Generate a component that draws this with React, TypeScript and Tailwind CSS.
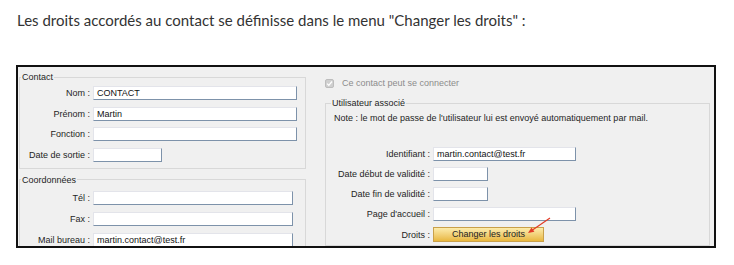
const Field = ({ w, value }: { w: string; value?: string }) => (
  <div
    className={`h-[14px] ${w} bg-white border border-t-[#e3e4ea] border-l-[#e3e4ea] border-b-[#7d92aa] border-r-[#7d92aa] pl-[3px] text-[9px] leading-[12px] text-[#111]`}
  >
    {value}
  </div>
);

const LeftRow = ({ label, w, value }: { label: string; w: string; value?: string }) => (
  <div className="flex items-center gap-[3px]">
    <span className="w-[70px] text-right">{label}</span>
    <Field w={w} value={value} />
  </div>
);

const RightRow = ({ label, children }: { label: string; children: React.ReactNode }) => (
  <div className="flex items-center gap-[3px]">
    <span className="w-[104px] text-right">{label}</span>
    {children}
  </div>
);

export default function App() {
  return (
    <div className="w-[734px] h-[265px] bg-white overflow-hidden">
      <p className="pt-[10px] pl-[17px] font-['Lato',sans-serif] text-[15px] leading-[20px] text-[#333]">
        Les droits accordés au contact se définisse dans le menu "Changer les droits" :
      </p>

      <div className="mt-[35px] ml-[16px] w-[700px] h-[183px] border-2 border-[#111] bg-[#f0f0f0] overflow-hidden font-['Liberation_Sans',sans-serif] text-[9px] leading-[12px] text-[#1e1e1e]">
        <div className="flex gap-[19px]">
          {/* left column */}
          <div className="w-[288px]">
            <fieldset className="ml-[1px] mt-[4px] w-[287px] border border-[#d8d8d8] pb-[6px]">
              <legend className="ml-[1px] px-[1px]">Contact</legend>
              <div className="mt-[3px] flex flex-col gap-[6.5px]">
                <LeftRow label="Nom :" w="w-[204px]" value="CONTACT" />
                <LeftRow label="Prénom :" w="w-[204px]" value="Martin" />
                <LeftRow label="Fonction :" w="w-[204px]" />
                <LeftRow label="Date de sortie :" w="w-[69px]" />
              </div>
            </fieldset>

            <fieldset className="ml-[1px] mt-[5px] w-[287px] border border-[#d8d8d8] pb-[6px]">
              <legend className="ml-[1px] px-[1px]">Coordonnées</legend>
              <div className="mt-[5px] flex flex-col gap-[7px]">
                <LeftRow label="Tél :" w="w-[200px]" />
                <LeftRow label="Fax :" w="w-[200px]" />
                <LeftRow label="Mail bureau :" w="w-[200px]" value="martin.contact@test.fr" />
              </div>
            </fieldset>
          </div>

          {/* right column */}
          <div className="w-[385px]">
            <div className="mt-[10px] flex items-center gap-[8px] text-[#8c8c8c]">
              <span className="w-[9px] h-[9px] rounded-[2px] bg-[#cfcfcf] border border-[#bdbdbd] flex items-center justify-center">
                <svg width="7" height="7" viewBox="0 0 7 7">
                  <path d="M1 3.6 L2.8 5.3 L6 1.5" stroke="#fff" strokeWidth="1.3" fill="none" />
                </svg>
              </span>
              <span>Ce contact peut se connecter</span>
            </div>

            <fieldset className="mt-[8px] w-[385px] border border-[#d8d8d8] pb-[3px]">
              <legend className="ml-[5px] px-[1px]">Utilisateur associé</legend>
              <p className="mt-[3px] pl-[8px]">
                Note : le mot de passe de l'utilisateur lui est envoyé automatiquement par mail.
              </p>
              <div className="mt-[23px] flex flex-col gap-[6px]">
                <RightRow label="Identifiant :">
                  <Field w="w-[143px]" value="martin.contact@test.fr" />
                </RightRow>
                <RightRow label="Date début de validité :">
                  <Field w="w-[55px]" />
                </RightRow>
                <RightRow label="Date fin de validité :">
                  <Field w="w-[55px]" />
                </RightRow>
                <RightRow label="Page d'accueil :">
                  <Field w="w-[143px]" />
                </RightRow>
                <RightRow label="Droits :">
                  <div className="relative">
                    <button className="w-[111px] h-[15px] border border-[#c9a04a] bg-gradient-to-b from-[#fcecab] to-[#e8b73c] text-[9px] leading-[13px] text-[#222]">
                      Changer les droits
                    </button>
                    <svg className="absolute left-[90px] top-[-12px]" width="32" height="22" viewBox="0 0 32 22">
                      <line x1="27" y1="3" x2="8" y2="16" stroke="#e23b26" strokeWidth="1.2" />
                      <polygon points="5,18 11.4,16.7 8.5,12.5" fill="#e23b26" />
                    </svg>
                  </div>
                </RightRow>
              </div>
            </fieldset>
          </div>
        </div>
      </div>
    </div>
  );
}
